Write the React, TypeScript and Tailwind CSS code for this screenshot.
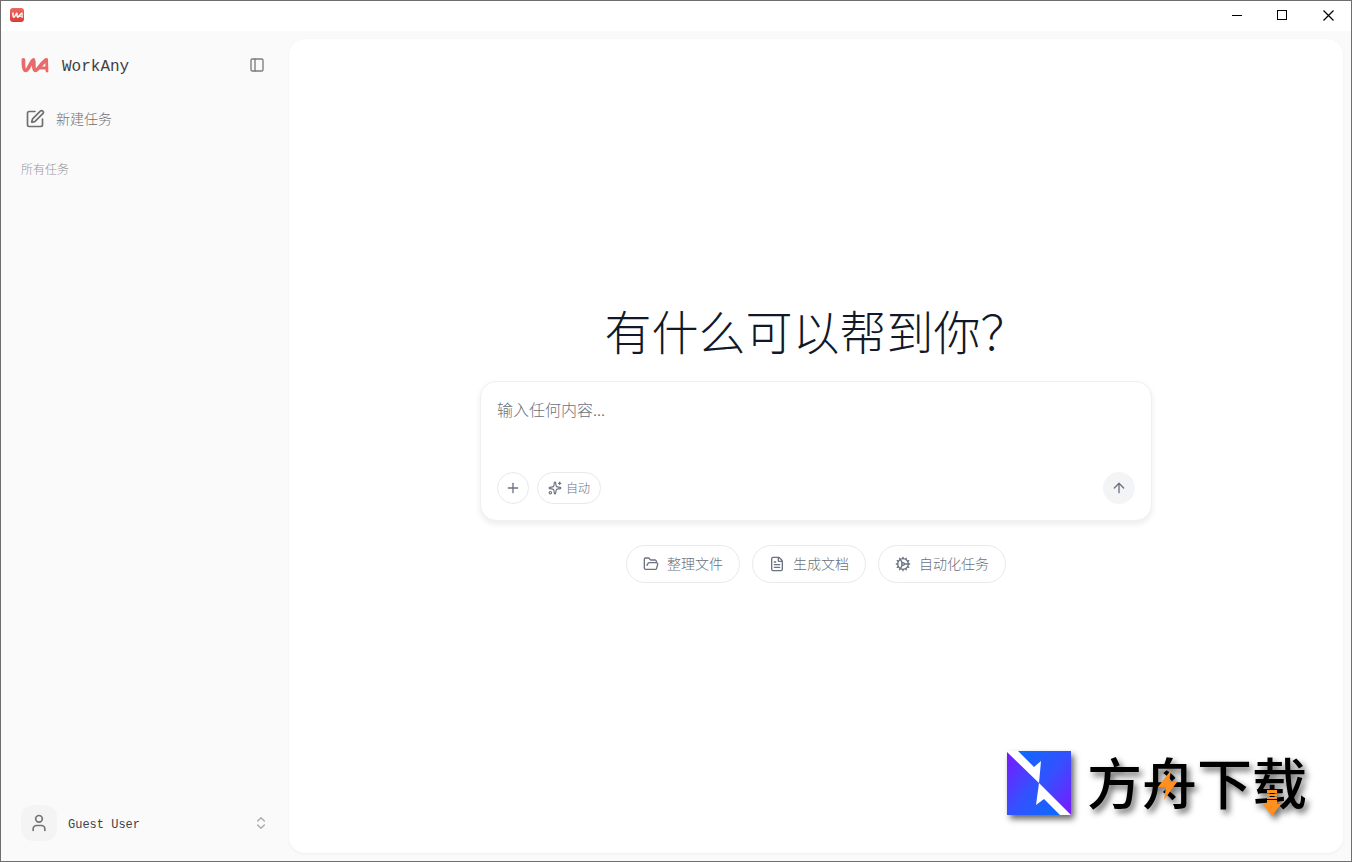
import React from 'react'
import {
  ArrowUp,
  ChevronsUpDown,
  Cog,
  FileText,
  FolderOpen,
  PanelLeft,
  Plus,
  Sparkles,
  SquarePen,
  User,
  type LucideIcon
} from 'lucide-react'
import { clsx } from 'clsx'

interface LogoProps {
  className?: string
}

const LogoMark: React.FC<LogoProps> = ({ className }) => (
  <svg className={className} viewBox="0 0 28 16" fill="none" stroke="currentColor" strokeLinecap="round" strokeLinejoin="round" aria-hidden="true">
    <path strokeWidth={3.8} d="M2.400 2.800C2.400 7 2.600 13.400 4.800 13.400C7.600 13.400 9.400 5 12.400 3C13.400 6 11.800 13.400 14.400 13.400C17 13.400 20.600 5.600 25.200 3" />
    <path strokeWidth={2.8} d="M25.600 3L26 14M19.500 11H25.500" />
  </svg>
)

const AppIcon: React.FC = () => (
  <span className="flex size-[14px] items-center justify-center rounded-[3px] bg-gradient-to-b from-[#ea6a62] to-[#d93a38] text-white">
    <LogoMark className="w-[11px]" />
  </span>
)

const TitleBar: React.FC = () => {
  const buttonClass = 'flex h-7 w-[46px] items-center justify-center text-black hover:bg-gray-200'

  return (
    <header className="flex h-[30px] shrink-0 items-center justify-between bg-white pb-0.5 pl-[9px]">
      <AppIcon />
      <div className="flex">
        <button type="button" aria-label="最小化" className={buttonClass}>
          <svg className="size-[11px]" viewBox="0 0 11 11" shapeRendering="crispEdges">
            <rect x="1" y="5" width="10" height="1" />
          </svg>
        </button>
        <button type="button" aria-label="最大化" className={buttonClass}>
          <svg className="size-[11px]" viewBox="0 0 11 11" fill="none" stroke="currentColor" shapeRendering="crispEdges">
            <rect x="0.5" y="0.5" width="9" height="9" />
          </svg>
        </button>
        <button type="button" aria-label="关闭" className={buttonClass}>
          <svg className="size-[11px]" viewBox="0 0 11 11" fill="none" stroke="currentColor" strokeWidth={1.2}>
            <path d="M0.500 0.500L10.500 10.500M10.500 0.500L0.500 10.500" />
          </svg>
        </button>
      </div>
    </header>
  )
}

const monoText = "pt-[3px] font-['Liberation_Mono',monospace] text-[#3f3f46]"

const Sidebar: React.FC = () => (
  <aside className="flex w-[288px] shrink-0 flex-col pt-5 pr-4 pb-5 pl-5">
    <div className="flex h-7 items-center justify-between">
      <div className="flex items-center gap-[13px]">
        <LogoMark className="w-7 text-[#e96a6a]" />
        <span className={clsx(monoText, 'text-base')}>WorkAny</span>
      </div>
      <button type="button" aria-label="收起侧边栏" className="flex size-8 items-center justify-center rounded-lg text-[#7c7c7e] hover:bg-gray-100">
        <PanelLeft className="size-4" />
      </button>
    </div>

    <button type="button" className="mt-5 flex h-10 items-center gap-[11px] rounded-xl pl-1 text-sm text-[#6f6f72] hover:bg-gray-100">
      <SquarePen className="size-5" />
      <span className="pb-0.5">新建任务</span>
    </button>

    <h2 className="mt-5 text-xs leading-5 text-[#98989b]">所有任务</h2>

    <button type="button" className="mt-auto flex items-center rounded-xl text-left">
      <span className="flex size-9 items-center justify-center rounded-xl bg-[#f4f4f4] text-[#737375]">
        <User className="size-5" />
      </span>
      <span className={clsx(monoText, 'ml-[11px] flex-1 text-xs')}>Guest User</span>
      <ChevronsUpDown className="mr-1 size-4 text-[#a9a9ab]" />
    </button>
  </aside>
)

const Composer: React.FC = () => {
  const roundButton = 'flex h-8 items-center justify-center rounded-full text-[#6b7280]'

  return (
    <form
      className="w-full rounded-2xl border border-[#f0f0f2] bg-white p-4 pt-[15px] shadow-[0_3px_6px_rgba(0,0,0,0.08)]"
      onSubmit={(e) => e.preventDefault()}
    >
      <textarea
        aria-label="任务内容"
        placeholder="输入任何内容..."
        className="block h-[75px] w-full resize-none bg-transparent text-base leading-6 text-gray-900 outline-none placeholder:text-[#6b7280]"
      />
      <div className="flex items-center gap-2">
        <button type="button" aria-label="添加" className={clsx(roundButton, 'w-8 border border-[#e8e9eb]')}>
          <Plus className="size-4" />
        </button>
        <button type="button" className={clsx(roundButton, 'gap-1 border border-[#e8e9eb] px-[10px] text-xs')}>
          <Sparkles className="size-[14px]" />
          自动
        </button>
        <button type="submit" aria-label="发送" className={clsx(roundButton, 'ml-auto w-8 bg-[#f3f4f6]')}>
          <ArrowUp className="size-4" />
        </button>
      </div>
    </form>
  )
}

const quickActions: Array<{ label: string; icon: LucideIcon }> = [
  { label: '整理文件', icon: FolderOpen },
  { label: '生成文档', icon: FileText },
  { label: '自动化任务', icon: Cog }
]

// Site mark that floats over the bottom right corner of the page
const Watermark: React.FC = () => (
  <div className="pointer-events-none absolute right-[44px] bottom-[46px] flex items-center gap-4 drop-shadow-[3px_4px_3px_rgba(0,0,0,0.6)]">
    <svg className="size-16" viewBox="0 0 64 64" aria-hidden="true">
      <defs>
        <linearGradient id="markTop" x1="0" y1="0" x2="1" y2="1">
          <stop offset="0" stopColor="#0a6cff" />
          <stop offset="0.5" stopColor="#3550ff" />
          <stop offset="1" stopColor="#7a18ff" />
        </linearGradient>
        <linearGradient id="markBottom" x1="0" y1="0" x2="1" y2="1">
          <stop offset="0" stopColor="#7a18ff" />
          <stop offset="0.5" stopColor="#3550ff" />
          <stop offset="1" stopColor="#0a6cff" />
        </linearGradient>
      </defs>
      <rect width="64" height="64" fill="#fff" />
      <path fill="url(#markTop)" d="M11 0H64V64L32 32L34 10L27 16Z" />
      <path fill="url(#markBottom)" d="M0 1L32 32L29 54L37 48L53 64H0Z" />
    </svg>
    <div className="relative pb-[6px] text-[55px] leading-[58px] font-medium text-black">
      方舟下载
      <svg className="absolute top-[19px] left-[71px] h-[30px] w-5" viewBox="0 0 20 30" fill="#ff9020" aria-hidden="true">
        <path d="M13 0L0 17H8L6 30L19 12H11Z" />
      </svg>
      <svg className="absolute top-[39px] left-[176px] h-[26px] w-[18px]" viewBox="0 0 18 26" fill="#ff9020" aria-hidden="true">
        <path d="M4 0H14V3H4ZM4 4H14V6H4ZM4 7H14V9H4ZM4 10H14V14H18L9 26L0 14H4Z" />
      </svg>
    </div>
  </div>
)

export default function App() {
  return (
    <div className="relative flex h-screen flex-col overflow-hidden border border-[#6e6e6e] bg-[#fafafa] font-['Noto_Sans_CJK_SC',sans-serif] font-light">
      <TitleBar />
      <div className="flex min-h-0 flex-1">
        <Sidebar />
        <main className="my-2 mr-2 flex min-w-0 flex-1 flex-col items-center justify-center rounded-2xl bg-white px-6 shadow-[0_1px_3px_rgba(0,0,0,0.05)]">
          <div className="flex w-full max-w-2xl flex-col items-center gap-6">
            <h1 className="pb-[6px] text-[47px] leading-[42px] whitespace-nowrap text-[#111827]">有什么可以帮到你？</h1>
            <Composer />
            <div className="flex flex-wrap justify-center gap-3">
              {quickActions.map(({ label, icon: Icon }) => (
                <button
                  key={label}
                  type="button"
                  className="flex h-[38px] items-center gap-2 rounded-full border border-[#e8e9eb] px-4 text-sm text-[#6b7280] hover:bg-gray-50"
                >
                  <Icon className="size-4" />
                  <span className="pb-0.5">{label}</span>
                </button>
              ))}
            </div>
          </div>
        </main>
      </div>
      <Watermark />
    </div>
  )
}
